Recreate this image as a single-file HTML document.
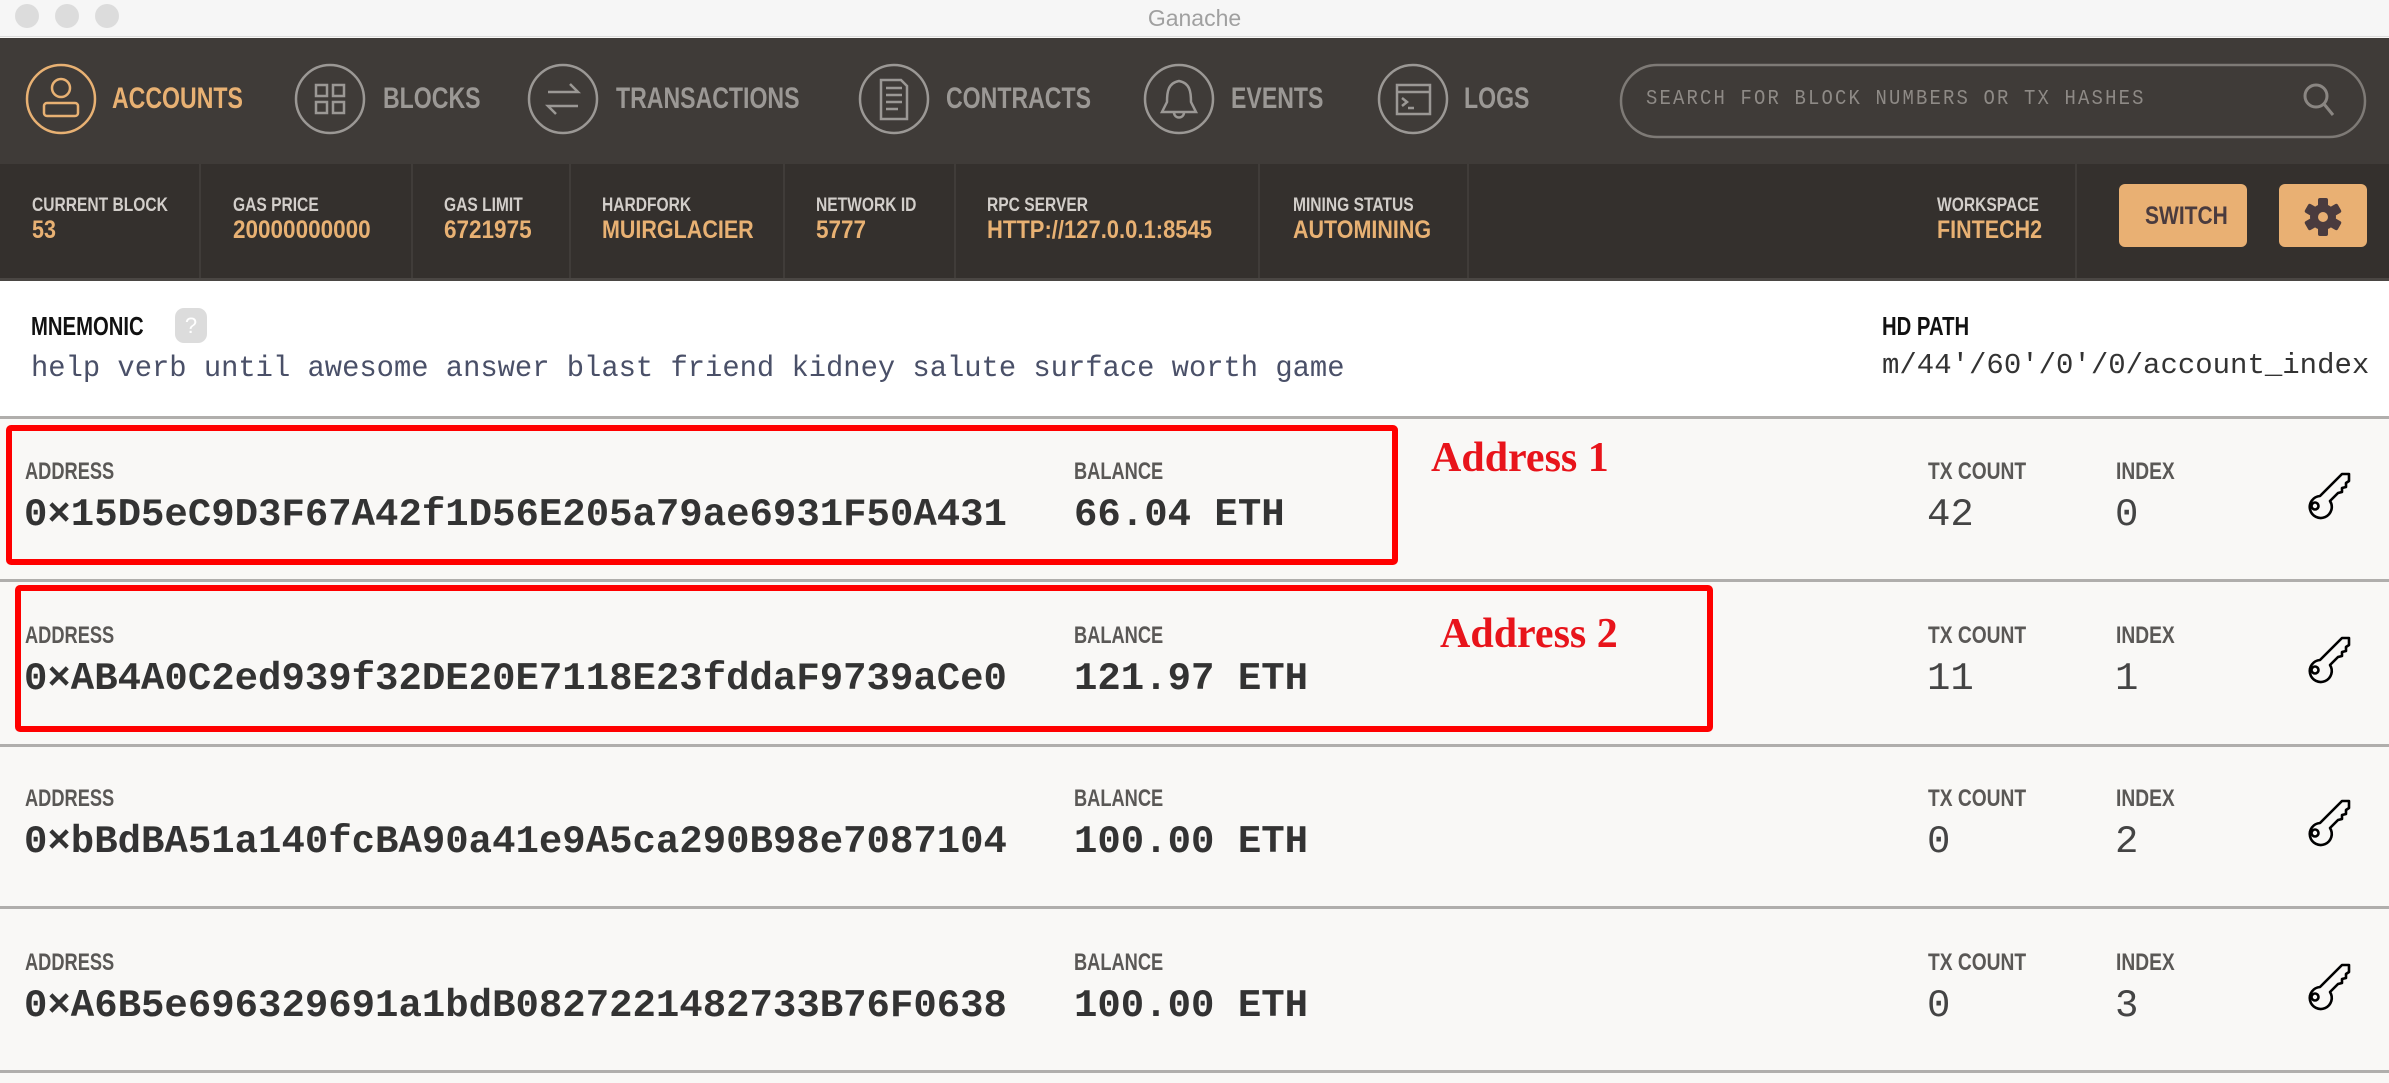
<!DOCTYPE html>
<html><head><meta charset="utf-8"><style>
*{margin:0;padding:0;box-sizing:border-box}
body{width:2389px;height:1083px;overflow:hidden;background:#f9f8f6;font-family:"Liberation Sans",sans-serif;position:relative}
.a{position:absolute;white-space:nowrap}
.c{display:inline-block;transform-origin:0 0;white-space:nowrap}
.nav{font-size:30px;font-weight:bold;line-height:30px;color:#9b9895}
.sl{font-size:19px;font-weight:bold;line-height:19px;color:#d2ceca}
.sv{font-size:25px;font-weight:bold;line-height:25px;color:#e8b173}
.rl{font-size:24px;font-weight:bold;line-height:24px;color:#5a5856}
.mono{font-family:"Liberation Mono",monospace}
.av{font-size:39px;line-height:39px;font-weight:bold;color:#333}
.tv{font-size:39px;line-height:39px;color:#444}
.div{position:absolute;top:164px;height:114px;width:2px;background:#403c39}
.sep{position:absolute;left:0;width:2389px;height:3px;background:#b0aeac}
.red{position:absolute;border:6px solid #ff0000;border-radius:5px}
.ann{position:absolute;font-family:"Liberation Serif",serif;font-weight:bold;font-size:42px;color:#e8141b;line-height:42px}
</style></head><body>
<div class="a" style="left:0;top:0;width:2389px;height:37px;background:#f6f6f6;border-bottom:1px solid #dcdcdc"></div>
<div class="a" style="left:15px;top:4px;width:24px;height:24px;border-radius:50%;background:#dcdcdc"></div>
<div class="a" style="left:55px;top:4px;width:24px;height:24px;border-radius:50%;background:#dcdcdc"></div>
<div class="a" style="left:95px;top:4px;width:24px;height:24px;border-radius:50%;background:#dcdcdc"></div>
<div class="a" style="left:0;top:4px;width:2389px;text-align:center;font-size:23px;color:#a0a0a0;line-height:28px">Ganache</div>

<div class="a" style="left:0;top:38px;width:2389px;height:126px;background:#3f3b38"></div>
<svg class="a" style="left:0;top:38px" width="2389" height="126" viewBox="0 38 2389 126">
<g fill="none" stroke-width="2.5">
<circle cx="61" cy="99" r="34" stroke="#e8b173"/>
<g stroke="#e8b173"><circle cx="61" cy="88" r="9"/><rect x="44" y="103" width="34" height="13" rx="3"/></g>
<g stroke="#9b9895">
<circle cx="330" cy="99" r="34"/>
<rect x="316" y="85" width="11" height="11"/><rect x="333" y="85" width="11" height="11"/><rect x="316" y="102" width="11" height="11"/><rect x="333" y="102" width="11" height="11"/>
<circle cx="563" cy="99" r="34"/>
<path d="M548 92 L578 92 L570 84 M578 106 L548 106 L556 114"/>
<circle cx="894" cy="99" r="34"/>
<path d="M881 80 L901 80 L907 86 L907 119 L881 119 Z M886 88 L902 88 M886 95 L902 95 M886 102 L902 102 M886 109 L898 109"/>
<circle cx="1179" cy="99" r="34"/>
<path d="M1179 81 C1168 83 1167 92 1167 102 L1162 112 L1196 112 L1191 102 C1191 92 1190 83 1179 81 Z M1174 113 C1175 119 1183 119 1184 113"/>
<circle cx="1413" cy="99" r="34"/>
<rect x="1397" y="85" width="33" height="29"/><path d="M1397 92 L1430 92 M1402 98 L1407 102 L1402 106 M1408 108 L1414 108"/>
</g>
<rect x="1621" y="65" width="744" height="72" rx="36" stroke="#7e7a76"/>
<circle cx="2316" cy="96" r="11" stroke="#8a8682" stroke-width="3"/><path d="M2324 104 L2333 115" stroke="#8a8682" stroke-width="3"/>
</g></svg>
<div class="a nav" style="left:112px;top:84px;color:#e8b173"><span class="c" style="transform:scaleX(.77)">ACCOUNTS</span></div>
<div class="a nav" style="left:383px;top:84px"><span class="c" style="transform:scaleX(.77)">BLOCKS</span></div>
<div class="a nav" style="left:616px;top:84px"><span class="c" style="transform:scaleX(.77)">TRANSACTIONS</span></div>
<div class="a nav" style="left:946px;top:84px"><span class="c" style="transform:scaleX(.77)">CONTRACTS</span></div>
<div class="a nav" style="left:1231px;top:84px"><span class="c" style="transform:scaleX(.77)">EVENTS</span></div>
<div class="a nav" style="left:1464px;top:84px"><span class="c" style="transform:scaleX(.77)">LOGS</span></div>
<div class="a mono" style="left:1646px;top:89px;font-size:21px;line-height:21px;color:#8e8a86;letter-spacing:2.4px"><span class="c" style="transform:scaleX(.9)">SEARCH FOR BLOCK NUMBERS OR TX HASHES</span></div>

<div class="a" style="left:0;top:164px;width:2389px;height:114px;background:#34302d"></div>
<div class="a" style="left:0;top:278px;width:2389px;height:3px;background:#4a4643"></div>
<div class="div" style="left:199px"></div><div class="div" style="left:411px"></div><div class="div" style="left:569px"></div><div class="div" style="left:783px"></div><div class="div" style="left:954px"></div><div class="div" style="left:1258px"></div><div class="div" style="left:1467px"></div><div class="div" style="left:2075px"></div>
<div class="a sl" style="left:32px;top:196px"><span class="c" style="transform:scaleX(.82)">CURRENT BLOCK</span></div>
<div class="a sv" style="left:32px;top:218px"><span class="c" style="transform:scaleX(.86)">53</span></div>
<div class="a sl" style="left:233px;top:196px"><span class="c" style="transform:scaleX(.82)">GAS PRICE</span></div>
<div class="a sv" style="left:233px;top:218px"><span class="c" style="transform:scaleX(.9)">20000000000</span></div>
<div class="a sl" style="left:444px;top:196px"><span class="c" style="transform:scaleX(.82)">GAS LIMIT</span></div>
<div class="a sv" style="left:444px;top:218px"><span class="c" style="transform:scaleX(.9)">6721975</span></div>
<div class="a sl" style="left:602px;top:196px"><span class="c" style="transform:scaleX(.82)">HARDFORK</span></div>
<div class="a sv" style="left:602px;top:218px"><span class="c" style="transform:scaleX(.86)">MUIRGLACIER</span></div>
<div class="a sl" style="left:816px;top:196px"><span class="c" style="transform:scaleX(.82)">NETWORK ID</span></div>
<div class="a sv" style="left:816px;top:218px"><span class="c" style="transform:scaleX(.9)">5777</span></div>
<div class="a sl" style="left:987px;top:196px"><span class="c" style="transform:scaleX(.82)">RPC SERVER</span></div>
<div class="a sv" style="left:987px;top:218px"><span class="c" style="transform:scaleX(.88)">HTTP://127.0.0.1:8545</span></div>
<div class="a sl" style="left:1293px;top:196px"><span class="c" style="transform:scaleX(.82)">MINING STATUS</span></div>
<div class="a sv" style="left:1293px;top:218px"><span class="c" style="transform:scaleX(.86)">AUTOMINING</span></div>
<div class="a sl" style="left:1937px;top:196px"><span class="c" style="transform:scaleX(.82)">WORKSPACE</span></div>
<div class="a sv" style="left:1937px;top:218px"><span class="c" style="transform:scaleX(.86)">FINTECH2</span></div>
<div class="a" style="left:2119px;top:184px;width:128px;height:63px;background:#e9b073;border-radius:6px"></div>
<div class="a" style="left:2145px;top:204px;font-size:25px;font-weight:bold;line-height:25px;color:#4a3b3e"><span class="c" style="transform:scaleX(.84)">SWITCH</span></div>
<div class="a" style="left:2279px;top:184px;width:88px;height:63px;background:#e9b073;border-radius:6px"></div>
<svg class="a" style="left:2303px;top:197px" width="40" height="40" viewBox="0 0 40 40"><g fill="#4a3b3e" transform="translate(20 20)">
<circle r="13"/>
<rect x="-5" y="-19" width="10" height="38" rx="2"/>
<rect x="-5" y="-19" width="10" height="38" rx="2" transform="rotate(60)"/>
<rect x="-5" y="-19" width="10" height="38" rx="2" transform="rotate(120)"/>
<circle r="5" fill="#e9b073"/></g></svg>

<div class="a" style="left:0;top:281px;width:2389px;height:136px;background:#fff"></div>
<div class="a" style="left:31px;top:313px;font-size:26px;font-weight:bold;line-height:26px;color:#111"><span class="c" style="transform:scaleX(.78)">MNEMONIC</span></div>
<div class="a" style="left:175px;top:308px;width:32px;height:35px;background:#dcdcdc;border-radius:9px;color:#fff;font-size:22px;text-align:center;line-height:35px">?</div>
<div class="a mono" style="left:31px;top:354px;font-size:30px;line-height:30px;color:#4a5068"><span class="c" style="transform:scaleX(.96)">help verb until awesome answer blast friend kidney salute surface worth game</span></div>
<div class="a" style="left:1882px;top:313px;font-size:26px;font-weight:bold;line-height:26px;color:#111"><span class="c" style="transform:scaleX(.78)">HD PATH</span></div>
<div class="a mono" style="left:1882px;top:351px;font-size:29px;line-height:29px;color:#333">m/44'/60'/0'/0/account_index</div>

<div class="sep" style="top:416px"></div>
<div class="sep" style="top:579px"></div>
<div class="sep" style="top:744px"></div>
<div class="sep" style="top:906px"></div>
<div class="sep" style="top:1070px"></div>

<div class="a rl" style="left:25px;top:460px"><span class="c" style="transform:scaleX(.76)">ADDRESS</span></div>
<div class="a rl" style="left:1074px;top:460px"><span class="c" style="transform:scaleX(.76)">BALANCE</span></div>
<div class="a rl" style="left:1928px;top:460px"><span class="c" style="transform:scaleX(.8)">TX COUNT</span></div>
<div class="a rl" style="left:2116px;top:460px"><span class="c" style="transform:scaleX(.8)">INDEX</span></div>
<div class="a mono av" style="left:24px;top:496px">0×15D5eC9D3F67A42f1D56E205a79ae6931F50A431</div>
<div class="a mono av" style="left:1074px;top:496px">66.04 ETH</div>
<div class="a mono tv" style="left:1927px;top:496px">42</div>
<div class="a mono tv" style="left:2115px;top:496px">0</div>

<div class="a rl" style="left:25px;top:624px"><span class="c" style="transform:scaleX(.76)">ADDRESS</span></div>
<div class="a rl" style="left:1074px;top:624px"><span class="c" style="transform:scaleX(.76)">BALANCE</span></div>
<div class="a rl" style="left:1928px;top:624px"><span class="c" style="transform:scaleX(.8)">TX COUNT</span></div>
<div class="a rl" style="left:2116px;top:624px"><span class="c" style="transform:scaleX(.8)">INDEX</span></div>
<div class="a mono av" style="left:24px;top:660px">0×AB4A0C2ed939f32DE20E7118E23fddaF9739aCe0</div>
<div class="a mono av" style="left:1074px;top:660px">121.97 ETH</div>
<div class="a mono tv" style="left:1927px;top:660px">11</div>
<div class="a mono tv" style="left:2115px;top:660px">1</div>

<div class="a rl" style="left:25px;top:787px"><span class="c" style="transform:scaleX(.76)">ADDRESS</span></div>
<div class="a rl" style="left:1074px;top:787px"><span class="c" style="transform:scaleX(.76)">BALANCE</span></div>
<div class="a rl" style="left:1928px;top:787px"><span class="c" style="transform:scaleX(.8)">TX COUNT</span></div>
<div class="a rl" style="left:2116px;top:787px"><span class="c" style="transform:scaleX(.8)">INDEX</span></div>
<div class="a mono av" style="left:24px;top:823px">0×bBdBA51a140fcBA90a41e9A5ca290B98e7087104</div>
<div class="a mono av" style="left:1074px;top:823px">100.00 ETH</div>
<div class="a mono tv" style="left:1927px;top:823px">0</div>
<div class="a mono tv" style="left:2115px;top:823px">2</div>

<div class="a rl" style="left:25px;top:951px"><span class="c" style="transform:scaleX(.76)">ADDRESS</span></div>
<div class="a rl" style="left:1074px;top:951px"><span class="c" style="transform:scaleX(.76)">BALANCE</span></div>
<div class="a rl" style="left:1928px;top:951px"><span class="c" style="transform:scaleX(.8)">TX COUNT</span></div>
<div class="a rl" style="left:2116px;top:951px"><span class="c" style="transform:scaleX(.8)">INDEX</span></div>
<div class="a mono av" style="left:24px;top:987px">0×A6B5e696329691a1bdB0827221482733B76F0638</div>
<div class="a mono av" style="left:1074px;top:987px">100.00 ETH</div>
<div class="a mono tv" style="left:1927px;top:987px">0</div>
<div class="a mono tv" style="left:2115px;top:987px">3</div>

<svg class="a" style="left:0;top:0" width="2389" height="1083" viewBox="0 0 2389 1083">
<defs><g id="k" fill="none" stroke="#000" stroke-width="2.6" stroke-linejoin="round">
<path d="M18 26 L40 4 L47 4 L47 11 L44 13 L44 17 L40 18 L40 22 L36 23 L28 31 A11 11 0 1 1 18 26 Z"/>
<circle cx="13" cy="36" r="3.5"/></g></defs>
<use href="#k" x="2302" y="470"/><use href="#k" x="2302" y="634"/><use href="#k" x="2302" y="797"/><use href="#k" x="2302" y="961"/>
</svg>

<div class="red" style="left:6px;top:425px;width:1392px;height:140px"></div>
<div class="red" style="left:15px;top:585px;width:1698px;height:147px"></div>
<div class="ann" style="left:1431px;top:437px">Address 1</div>
<div class="ann" style="left:1440px;top:613px">Address 2</div>
</body></html>
